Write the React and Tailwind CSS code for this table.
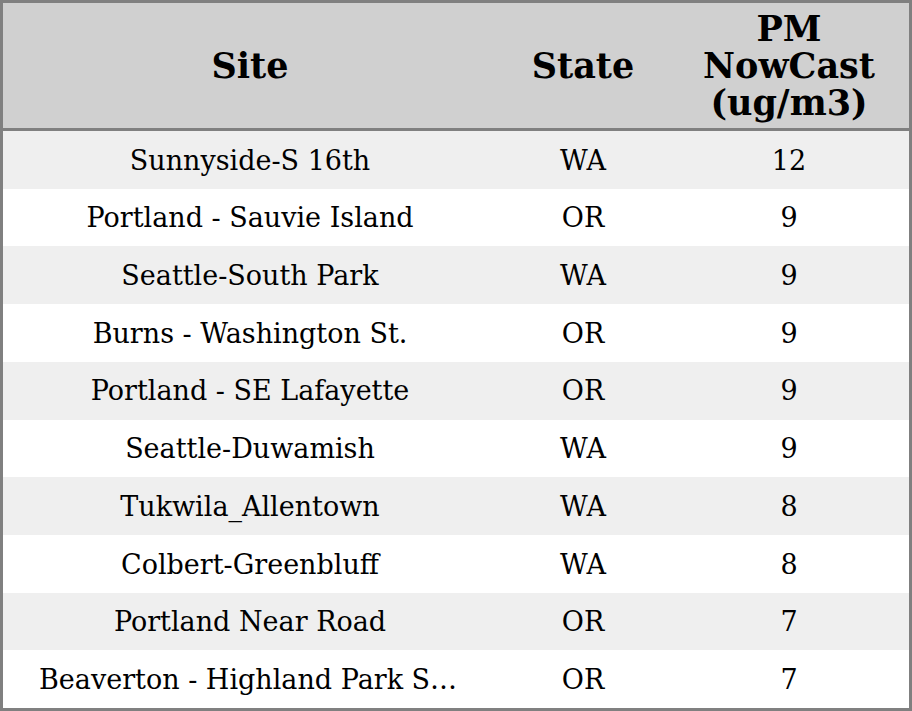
const rows = [
  ["Sunnyside-S 16th", "WA", "12"],
  ["Portland - Sauvie Island", "OR", "9"],
  ["Seattle-South Park", "WA", "9"],
  ["Burns - Washington St.", "OR", "9"],
  ["Portland - SE Lafayette", "OR", "9"],
  ["Seattle-Duwamish", "WA", "9"],
  ["Tukwila_Allentown", "WA", "8"],
  ["Colbert-Greenbluff", "WA", "8"],
  ["Portland Near Road", "OR", "7"],
  ["Beaverton - Highland Park School", "OR", "7"],
];

export default function App() {
  return (
    <div
      className="w-[912px] h-[711px] border-[3px] border-[#808080] bg-white text-black flex flex-col overflow-hidden"
      style={{ fontFamily: '"DejaVu Serif", serif' }}
    >
      <div className="h-[125px] shrink-0 bg-[#d0d0d0] border-b-[3px] border-[#808080] box-content flex items-center font-bold text-[35px] leading-[37px] text-center">
        <div className="w-[494px]">Site</div>
        <div className="w-[172px]">State</div>
        <div className="w-[240px]">
          PM<br />NowCast<br />(ug/m3)
        </div>
      </div>
      <div className="flex-1 flex flex-col">
        {rows.map((r, i) => (
          <div
            key={i}
            className={`flex-1 flex items-center pt-[2px] text-center text-[27px] ${i % 2 === 0 ? "bg-[#efefef]" : "bg-white"}`}
          >
            <div className="w-[494px] px-[36px] truncate">{r[0]}</div>
            <div className="w-[172px]">{r[1]}</div>
            <div className="w-[240px]">{r[2]}</div>
          </div>
        ))}
      </div>
    </div>
  );
}
